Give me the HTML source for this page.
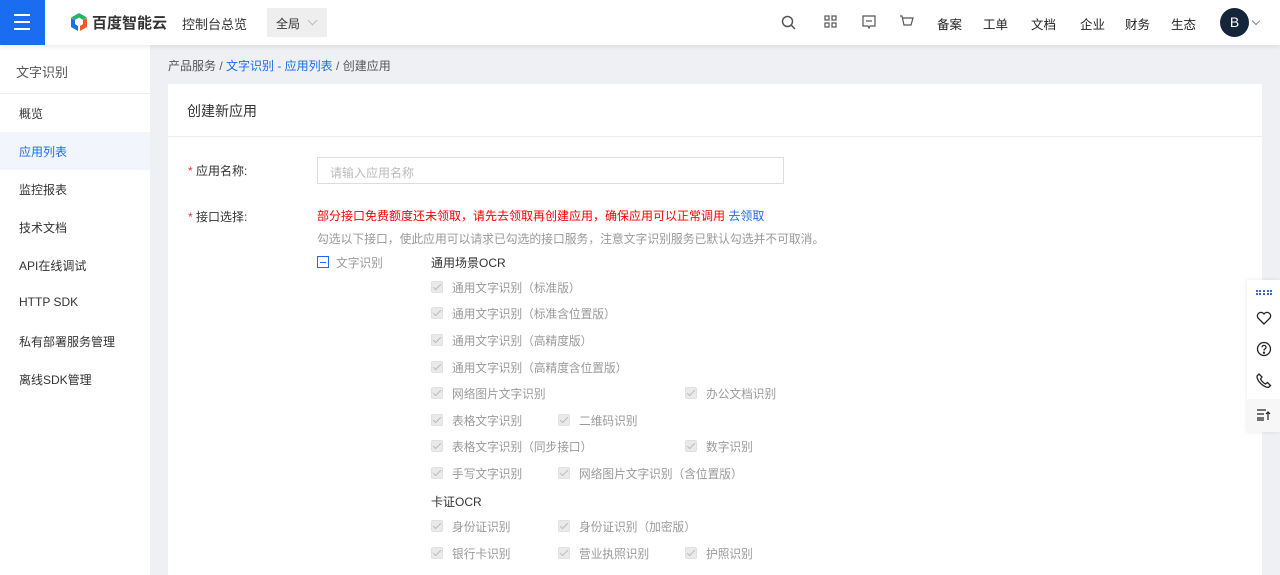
<!DOCTYPE html>
<html><head><meta charset="utf-8"><style>
*{margin:0;padding:0;box-sizing:border-box}
html,body{width:1280px;height:575px;overflow:hidden}
body{background:#eef0f3;font-family:"Liberation Sans","Noto Sans CJK SC",sans-serif;font-size:12px;color:#333;position:relative}
.a{position:absolute;white-space:nowrap}
.hdr{position:absolute;left:0;top:0;width:1280px;height:45px;background:#fff;box-shadow:0 2px 4px rgba(0,0,0,.08);z-index:2}
.side{position:absolute;left:0;top:45px;width:150px;height:530px;background:#fff}
.side .it{position:absolute;left:19px;font-size:12px;color:#333}
.card{position:absolute;left:168px;top:84px;width:1094px;height:491px;background:#fff}
.cb{position:absolute;width:12px;height:12px;background:#eaeaea;border:1px solid #e0e0e0;border-radius:2px}
.cb:after{content:"";position:absolute;left:3px;top:0px;width:3px;height:7px;border:solid #bbb;border-width:0 1.5px 1.5px 0;transform:rotate(45deg)}
.lb{position:absolute;color:#999;font-size:11.7px;white-space:nowrap}
.nav{position:absolute;top:14px;font-size:12.5px;color:#222}
</style></head><body>
<div class="hdr">
 <div class="a" style="left:0;top:0;width:45px;height:45px;background:#1a6df0">
  <div class="a" style="left:14px;top:14px;width:16px;height:2px;background:#fff"></div>
  <div class="a" style="left:14px;top:21px;width:16px;height:2px;background:#fff"></div>
  <div class="a" style="left:14px;top:28px;width:16px;height:2px;background:#fff"></div>
 </div>
 <svg class="a" style="left:69px;top:12px" width="20" height="20" viewBox="0 0 20 20"><path d="M10 1L18 5.5 14 8 10 5.5 6 8 2 5.5Z" fill="#26b36b"/><path d="M2 6v9l7 4v-5l-3-2V8Z" fill="#1f6de8"/><path d="M18 6v9l-7 4v-5l3-2V8Z" fill="#f05a28"/></svg>
 <div class="a" style="left:92px;top:12px;font-size:15px;font-weight:bold;color:#333">百度智能云</div>
 <div class="a" style="left:182px;top:14px;font-size:13px;color:#333">控制台总览</div>
 <div class="a" style="left:267px;top:8px;width:60px;height:29px;background:#eee"><span class="a" style="left:9px;top:7px;font-size:12px">全局</span><span class="a" style="left:42px;top:9px;width:7px;height:7px;border:solid #bbb;border-width:0 1px 1px 0;transform:rotate(45deg)"></span></div>
 <svg class="a" style="left:781px;top:15px" width="15" height="15"><circle cx="6.5" cy="6.5" r="5" fill="none" stroke="#555" stroke-width="1.5"/><path d="M10 10l4 4" stroke="#555" stroke-width="1.5"/></svg>
 <svg class="a" style="left:824px;top:15px" width="13" height="14" fill="none" stroke="#555" stroke-width="1.2"><rect x="1" y="1" width="4" height="4"/><rect x="8" y="1" width="4" height="4"/><rect x="1" y="8" width="4" height="4"/><rect x="8" y="8" width="4" height="4"/></svg>
 <svg class="a" style="left:862px;top:15px" width="14" height="15" fill="none" stroke="#555" stroke-width="1.2"><path d="M1 1h12v10H8l-1 2-1-2H1Z"/><path d="M4 6h6"/></svg>
 <svg class="a" style="left:899px;top:15px" width="15" height="14" fill="none" stroke="#555" stroke-width="1.2"><path d="M1 1h2l2 9h7l2-7H4"/></svg>
 <div class="nav" style="left:937px">备案</div><div class="nav" style="left:983px">工单</div><div class="nav" style="left:1031px">文档</div><div class="nav" style="left:1080px">企业</div><div class="nav" style="left:1125px">财务</div><div class="nav" style="left:1171px">生态</div>
 <div class="a" style="left:1220px;top:8px;width:29px;height:29px;border-radius:50%;background:#15253a;color:#fff;font-size:14px;text-align:center;line-height:29px">B</div>
 <span class="a" style="left:1253px;top:18px;width:6px;height:6px;border-right:1px solid #888;border-bottom:1px solid #888;transform:rotate(45deg)"></span>
</div>
<div class="side">
 <div class="a" style="left:16px;top:17px;font-size:13px;color:#555">文字识别</div>
 <div class="a" style="left:0;top:48px;width:150px;height:1px;background:#eee"></div>
 <div class="it" style="top:60px">概览</div>
 <div class="a" style="left:0;top:87px;width:150px;height:38px;background:#f2f6fc"></div>
 <div class="it" style="top:98px;color:#1a6df0">应用列表</div>
 <div class="it" style="top:136px">监控报表</div>
 <div class="it" style="top:174px">技术文档</div>
 <div class="it" style="top:212px">API在线调试</div>
 <div class="it" style="top:250px">HTTP SDK</div>
 <div class="it" style="top:288px">私有部署服务管理</div>
 <div class="it" style="top:326px">离线SDK管理</div>
</div>
<div class="a" style="left:168px;top:57px;color:#555">产品服务 / <span style="color:#1a6df0">文字识别 - 应用列表</span> / 创建应用</div>
<div class="card">
 <div class="a" style="left:19px;top:17px;font-size:14px;color:#333">创建新应用</div>
 <div class="a" style="left:0;top:52px;width:1094px;height:1px;background:#eee"></div>
 <div class="a" style="left:20px;top:78px;color:#333"><span style="color:#e33">*</span> 应用名称:</div>
 <div class="a" style="left:149px;top:73px;width:467px;height:27px;border:1px solid #ddd;color:#bbb;padding:6px 12px">请输入应用名称</div>
 <div class="a" style="left:20px;top:124px;color:#333"><span style="color:#e33">*</span> 接口选择:</div>
 <div class="a" style="left:149px;top:123px;color:#f00">部分接口免费额度还未领取，请先去领取再创建应用，确保应用可以正常调用 <span style="color:#1a6df0">去领取</span></div>
 <div class="a" style="left:149px;top:146px;color:#999;font-size:11.8px">勾选以下接口，使此应用可以请求已勾选的接口服务，注意文字识别服务已默认勾选并不可取消。</div>
 <div class="a" style="left:149px;top:172px;width:12px;height:12px;border:1px solid #1a6df0"><div class="a" style="left:2px;top:4.5px;width:6px;height:1px;background:#1a6df0"></div></div>
 <div class="lb" style="left:168px;top:170px">文字识别</div>
 <div class="a" style="left:263px;top:170px;color:#333">通用场景OCR</div>
 <div class="a" style="left:263px;top:409px;color:#333">卡证OCR</div>
</div>
<div id="rows"></div>
<div class="a" style="left:1247px;top:280px;width:33px;height:152px;background:#fff;box-shadow:0 0 4px rgba(0,0,0,.1)">
 <div class="a" style="left:9px;top:10px;width:16px;height:5px;border-top:2px dotted #3a6db0;border-bottom:2px dotted #3a6db0"></div>
 <svg class="a" style="left:9px;top:31px" width="16" height="14" fill="none" stroke="#222" stroke-width="1.3"><path d="M8 13L2 7a3.3 3.3 0 016-4 3.3 3.3 0 016 4Z"/></svg>
 <svg class="a" style="left:9px;top:61px" width="16" height="16" fill="none" stroke="#222" stroke-width="1.3"><circle cx="8" cy="8" r="6.5"/><path d="M6 6.3a2 2 0 114 .2c0 1.3-2 1.3-2 3"/><circle cx="8" cy="11.7" r=".5" fill="#222"/></svg>
 <svg class="a" style="left:9px;top:92px" width="16" height="16" fill="none" stroke="#222" stroke-width="1.3"><path d="M3 2l3 3-1.5 2c1 2 3 4 5 5l2-1.5 3 3-2 2C7 15 1 9 1 4Z"/></svg>
 <div class="a" style="left:0;top:119px;width:33px;height:33px;background:#f7f7f7"></div>
 <svg class="a" style="left:10px;top:129px" width="14" height="12" stroke="#222" stroke-width="1.2"><path d="M0 1h9M0 5h7M0 9h7M0 11h7M11 11V3M9 5l2-2 2 2" fill="none"/></svg>
</div>
<script>
var R=[[287,[[0,"通用文字识别（标准版）"]]],[313,[[0,"通用文字识别（标准含位置版）"]]],[340,[[0,"通用文字识别（高精度版）"]]],[367,[[0,"通用文字识别（高精度含位置版）"]]],[393,[[0,"网络图片文字识别"],[2,"办公文档识别"]]],[420,[[0,"表格文字识别"],[1,"二维码识别"]]],[446,[[0,"表格文字识别（同步接口）"],[2,"数字识别"]]],[473,[[0,"手写文字识别"],[1,"网络图片文字识别（含位置版）"]]],[526,[[0,"身份证识别"],[1,"身份证识别（加密版）"]]],[553,[[0,"银行卡识别"],[1,"营业执照识别"],[2,"护照识别"]]]];
var X=[431,558,685],h="";
R.forEach(function(r){r[1].forEach(function(c){var x=X[c[0]];h+='<div class="cb" style="left:'+x+'px;top:'+(r[0]-6)+'px"></div><div class="lb" style="left:'+(x+21)+'px;top:'+(r[0]-8)+'px">'+c[1]+'</div>';});});
document.getElementById("rows").innerHTML=h;
</script>
</body></html>
